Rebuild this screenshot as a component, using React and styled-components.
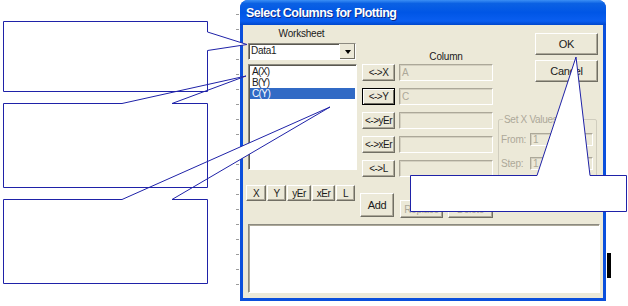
import React from 'react';
import styled, { createGlobalStyle } from 'styled-components';

const GlobalStyle = createGlobalStyle`
  body {
    margin: 0;
    background: #ffffff;
    font-family: "Liberation Sans", Arial, sans-serif;
  }
`;

const Stage = styled.div`
  position: relative;
  width: 628px;
  height: 306px;
  display: flex;
  align-items: flex-start;
  background: #ffffff;
  overflow: hidden;
`;

const Ruler = styled.div`
  width: 3px;
  height: 292px;
  margin-left: 236px;
  background: repeating-linear-gradient(
    to bottom,
    transparent 0px,
    transparent 14px,
    #9c9c9c 14px,
    #9c9c9c 15px
  );
`;

const EdgeMark = styled.div`
  width: 4px;
  height: 25px;
  margin: 253px 0 0 1px;
  background: #000000;
`;

const Window = styled.div`
  width: 366px;
  height: 301px;
  margin-left: 1px;
  display: flex;
  flex-direction: column;
  background: #0a4fdc;
  border-radius: 8px 8px 0 0;
  overflow: hidden;
`;

const TitleBar = styled.div`
  flex-shrink: 0;
  height: 25px;
  padding-left: 6px;
  display: flex;
  align-items: center;
  background: linear-gradient(
    180deg,
    #3b8ff5 0%,
    #0b61e3 14%,
    #0056e6 50%,
    #0a5ef0 84%,
    #0047cc 100%
  );
  color: #ffffff;
  font: bold 12.5px "Liberation Sans", Arial, sans-serif;
  letter-spacing: -0.5px;
  text-shadow: 1px 1px 0 #0b2a8a;
`;

const Body = styled.div`
  flex: 1;
  min-height: 0;
  margin: 0 3px 3px 3px;
  padding: 3px 3px 6px 3px;
  display: flex;
  flex-direction: column;
  background: #ece9d8;
  font-size: 10px;
  color: #1a1a1a;
`;

const TopSection = styled.div`
  display: flex;
  align-items: flex-start;
`;

const Column = styled.div`
  display: flex;
  flex-direction: column;
  width: ${(p) => p.$width}px;
  margin-left: ${(p) => p.$left || 0}px;
`;

const Label = styled.div`
  height: 12px;
  line-height: 12px;
  text-align: center;
  letter-spacing: -0.2px;
`;

const Combo = styled.div`
  display: flex;
  width: 108px;
  height: 17px;
  margin: 3px 0 0 2px;
  box-sizing: border-box;
  background: #ffffff;
  border: 1px solid;
  border-color: #8c8a80 #ffffff #ffffff #8c8a80;
  box-shadow: inset 1px 1px 0 #5a5850;
`;

const ComboText = styled.div`
  flex: 1;
  padding-left: 2px;
  line-height: 14px;
  letter-spacing: -0.3px;
`;

const ComboArrow = styled.div`
  width: 15px;
  display: flex;
  align-items: center;
  justify-content: center;
  background: #ece9d8;
  border-left: 1px solid #ffffff;
  box-shadow: inset -1px -1px 0 #716f64;
  &::after {
    content: '';
    border-left: 3.5px solid transparent;
    border-right: 3.5px solid transparent;
    border-top: 4px solid #000000;
  }
`;

const ListBox = styled.div`
  width: 109px;
  height: 106px;
  margin: 4px 0 0 2px;
  box-sizing: border-box;
  padding: 1px;
  background: #ffffff;
  border: 1px solid;
  border-color: #8c8a80 #ffffff #ffffff #8c8a80;
  box-shadow: inset 1px 1px 0 #5a5850;
`;

const ListItem = styled.div`
  height: 11px;
  line-height: 11px;
  padding-left: 2px;
  letter-spacing: -0.6px;
  background: ${(p) => (p.$selected ? '#316ac5' : 'transparent')};
  color: ${(p) => (p.$selected ? '#ffffff' : '#1a1a1a')};
`;

const ButtonRow = styled.div`
  display: flex;
  gap: 1px;
  margin-top: 15px;
`;

const Button = styled.div`
  box-sizing: border-box;
  width: ${(p) => p.$w}px;
  height: ${(p) => p.$h}px;
  display: flex;
  align-items: center;
  justify-content: center;
  background: #ece9d8;
  border: 1px solid;
  border-color: ${(p) => (p.$focus ? '#000000' : '#ffffff #716f64 #716f64 #ffffff')};
  box-shadow: ${(p) =>
    p.$focus
      ? 'inset 1px 1px 0 #ffffff, inset -1px -1px 0 #716f64'
      : 'inset -1px -1px 0 #aca899'};
  color: ${(p) => (p.$disabled ? '#aca899' : '#1a1a1a')};
  font-size: ${(p) => p.$size || 10}px;
  letter-spacing: ${(p) => (p.$tight ? -0.5 : -0.3)}px;
  white-space: nowrap;
  overflow: hidden;
`;

const ColumnHeader = styled.div`
  width: 94px;
  height: 36px;
  margin-left: 39px;
  box-sizing: border-box;
  padding-top: 23px;
  line-height: 12px;
  text-align: center;
  letter-spacing: -0.2px;
`;

const SwapRow = styled.div`
  display: flex;
  height: 17px;
  margin-bottom: 7px;
  padding-left: 2px;
  gap: 4px;
`;

const Field = styled.div`
  box-sizing: border-box;
  width: ${(p) => p.$w || 94}px;
  height: ${(p) => p.$h || 17}px;
  padding-left: 2px;
  line-height: ${(p) => (p.$h || 17) - 2}px;
  background: #ece9d8;
  border: 1px solid;
  border-color: #aca899 #ffffff #ffffff #aca899;
  box-shadow: inset 1px 1px 0 #d4d0c0;
  color: #aca899;
`;

const ActionRow = styled.div`
  display: flex;
  align-items: flex-start;
  margin-top: 9px;
  gap: 5px;
`;

const Spaced = styled.div`
  margin-top: ${(p) => p.$top || 0}px;
  margin-left: ${(p) => p.$left || 0}px;
`;

const GroupBox = styled.fieldset`
  width: 99px;
  height: 70px;
  box-sizing: border-box;
  margin: 32px 0 0 0;
  padding: 8px 0 0 2px;
  border: 1px solid #d0cdbe;
  border-radius: 2px;
`;

const Legend = styled.legend`
  padding: 0 1px;
  margin-left: 2px;
  color: #aca899;
  font-size: 10px;
  letter-spacing: -0.3px;
`;

const GroupRow = styled.div`
  display: flex;
  align-items: center;
  height: 13px;
  margin-bottom: 11px;
  color: #aca899;
  letter-spacing: -0.2px;
`;

const GroupLabel = styled.div`
  width: 29px;
`;

const TextArea = styled.div`
  height: 69px;
  flex-shrink: 0;
  margin: 6px 0 0 2px;
  box-sizing: border-box;
  background: #ffffff;
  border: 1px solid;
  border-color: #8c8a80 #ffffff #ffffff #8c8a80;
  box-shadow: inset 1px 1px 0 #aca899;
`;

const Overlay = styled.svg`
  position: absolute;
  left: 0;
  top: 0;
  pointer-events: none;
`;

const callouts = [
  '3.5,21.5 207.5,21.5 207.5,32 247,44.5 207.5,50.5 207.5,91.5 3.5,91.5',
  '3.5,103.5 122,103.5 246,76 172,103.5 207.5,103.5 207.5,187.5 3.5,187.5',
  '3.5,199.5 122,199.5 330,107 172,199.5 207.5,199.5 207.5,283.5 3.5,283.5',
  '410.5,175.5 537,175.5 576,57 590,175.5 626.5,175.5 626.5,211.5 410.5,211.5',
];

function Callouts() {
  return (
    <Overlay width="628" height="306" viewBox="0 0 628 306">
      {callouts.map((pts) => (
        <polygon key={'f' + pts} points={pts} fill="#ffffff" stroke="none" />
      ))}
      {callouts.map((pts) => (
        <polygon key={'s' + pts} points={pts} fill="none" stroke="#1f22a8" strokeWidth="1" />
      ))}
    </Overlay>
  );
}

const swaps = [
  { label: '<->X', value: 'A' },
  { label: '<->Y', value: 'C', focus: true },
  { label: '<->yEr', value: '' },
  { label: '<->xEr', value: '' },
  { label: '<->L', value: '' },
];

const pickers = [
  { label: 'X', w: 20 },
  { label: 'Y', w: 19 },
  { label: 'yEr', w: 24 },
  { label: 'xEr', w: 23 },
  { label: 'L', w: 19 },
];

export default function App() {
  return (
    <>
      <GlobalStyle />
      <Stage>
        <Ruler />
        <Window>
          <TitleBar>Select Columns for Plotting</TitleBar>
          <Body>
            <TopSection>
              <Column $width={111}>
                <Label>Worksheet</Label>
                <Combo>
                  <ComboText>Data1</ComboText>
                  <ComboArrow />
                </Combo>
                <ListBox>
                  <ListItem>A(X)</ListItem>
                  <ListItem>B(Y)</ListItem>
                  <ListItem $selected>C(Y)</ListItem>
                </ListBox>
                <ButtonRow>
                  {pickers.map((b) => (
                    <Button key={b.label} $w={b.w} $h={16} $tight>
                      {b.label}
                    </Button>
                  ))}
                </ButtonRow>
              </Column>

              <Column $width={136} $left={3}>
                <ColumnHeader>Column</ColumnHeader>
                {swaps.map((s) => (
                  <SwapRow key={s.label}>
                    <Button $w={33} $h={17} $focus={s.focus} $tight>
                      {s.label}
                    </Button>
                    <Field>{s.value}</Field>
                  </SwapRow>
                ))}
                <ActionRow>
                  <Button $w={34} $h={24} $size={11}>
                    Add
                  </Button>
                  <Spaced $top={7} $left={1}>
                    <Button $w={43} $h={18} $disabled>
                      Replace
                    </Button>
                  </Spaced>
                  <Spaced $top={7}>
                    <Button $w={45} $h={18} $disabled>
                      Delete
                    </Button>
                  </Spaced>
                </ActionRow>
              </Column>

              <Column $width={102} $left={2}>
                <Spaced $top={5} $left={37}>
                  <Button $w={63} $h={22} $size={11}>
                    OK
                  </Button>
                </Spaced>
                <Spaced $top={5} $left={37}>
                  <Button $w={63} $h={22} $size={11}>
                    Cancel
                  </Button>
                </Spaced>
                <GroupBox>
                  <Legend>Set X Values</Legend>
                  <GroupRow>
                    <GroupLabel>From:</GroupLabel>
                    <Field $w={63} $h={13}>1</Field>
                  </GroupRow>
                  <GroupRow>
                    <GroupLabel>Step:</GroupLabel>
                    <Field $w={63} $h={13}>1</Field>
                  </GroupRow>
                </GroupBox>
              </Column>
            </TopSection>
            <TextArea />
          </Body>
        </Window>
        <EdgeMark />
        <Callouts />
      </Stage>
    </>
  );
}
